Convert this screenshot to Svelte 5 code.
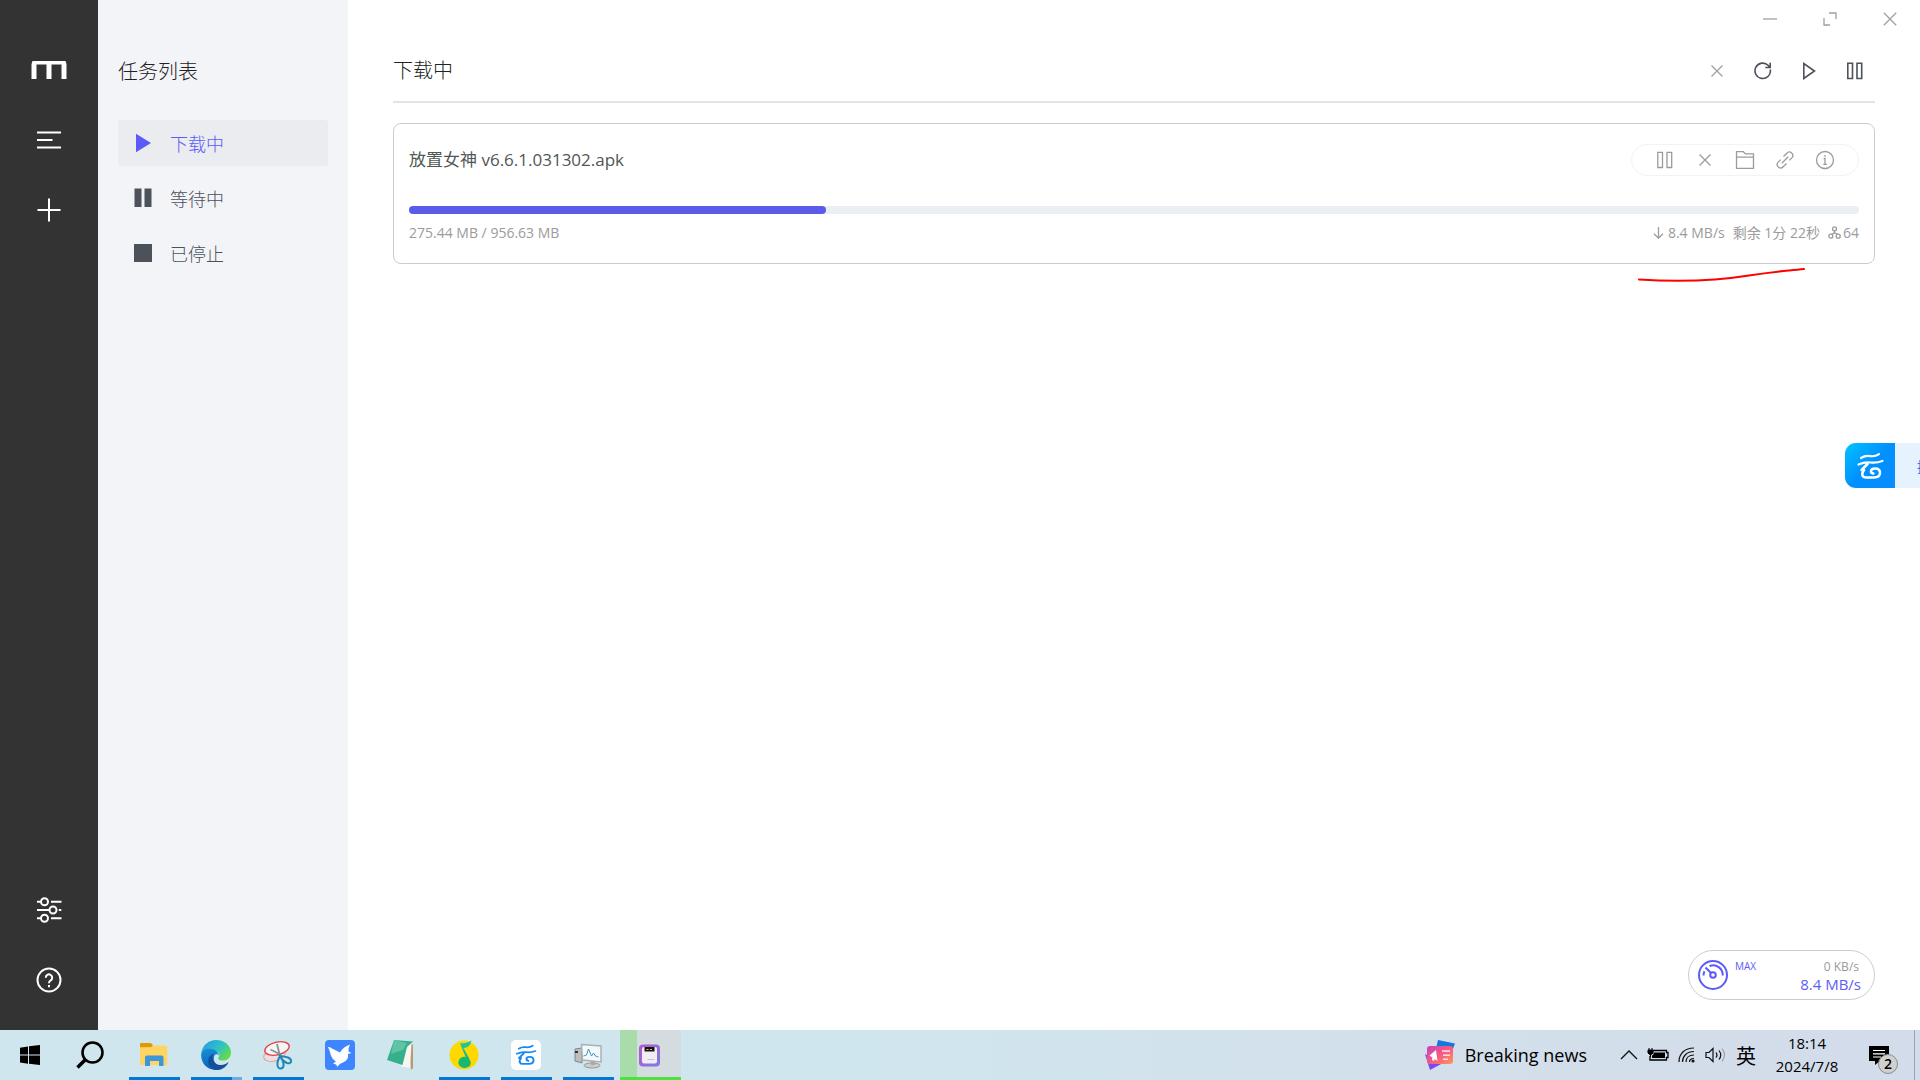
<script>
    let filters = [
        { id: 'active', label: '下载中' },
        { id: 'waiting', label: '等待中' },
        { id: 'stopped', label: '已停止' }
    ];
    let current = $state('active');
    let currentLabel = $derived(filters.find(f => f.id === current).label);

    let task = {
        name: '放置女神 v6.6.1.031302.apk',
        completed: 275.44,
        total: 956.63,
        speed: '8.4 MB/s',
        remaining: '剩余 1分 22秒',
        connections: 64
    };
    let percent = $derived((task.completed / task.total) * 100);

    let apps = [
        { id: 'explorer', title: '文件资源管理器', state: 'open' },
        { id: 'edge', title: 'Microsoft Edge', state: 'open multi' },
        { id: 'snip', title: '截图工具', state: 'open' },
        { id: 'bird', title: '迅雷', state: '' },
        { id: 'notes', title: '笔记', state: '' },
        { id: 'music', title: 'QQ音乐', state: 'open' },
        { id: 'cloud', title: '云盘', state: 'open' },
        { id: 'monitor', title: '任务管理器', state: 'open' },
        { id: 'motrix', title: 'Motrix', state: 'open busy' }
    ];
</script>

{#snippet icon(name)}
    {#if name === 'close'}
        <svg width="12" height="12" viewBox="0 0 12 12"><path d="M.5.5l11 11M11.500.500l-11 11" /></svg>
    {:else if name === 'pause'}
        <svg width="16" height="18" viewBox="0 0 16 18"><path d="M.8 1.300h4.700v15.200H.8zM10 1.300h4.700v15.200H10z" /></svg>
    {:else if name === 'play'}
        <svg width="14" height="18" viewBox="0 0 14 18"><path d="M1.800 1.500v15L12.500 9z" /></svg>
    {:else if name === 'refresh'}
        <svg width="18" height="18" viewBox="0 0 18 18"><path d="M16.300 7.500A7.700 7.700 0 1 1 14.300 3.500L15.500 5M16.200 .8v4.700h-4.900" /></svg>
    {:else if name === 'folder'}
        <svg width="20" height="20" viewBox="0 0 20 20"><path d="M1.500 18.300V1.700h6.800l2.200 2.200h8v14.400zM1.500 7.200h17" /></svg>
    {:else if name === 'link'}
        <svg width="18" height="18" viewBox="0 0 18 18"><path d="M5.800 12.200l6.400-6.400M7.500 5.500l3.300-3.300a3.300 3.300 0 0 1 5 4.700l-2.500 2.500M10.500 12.500l-3.300 3.300a3.300 3.300 0 0 1-5-4.700L4.700 8.600" /></svg>
    {:else if name === 'info'}
        <svg width="20" height="20" viewBox="0 0 20 20"><circle cx="10" cy="10" r="8.500" /><path d="M8.600 8.500H10v5.800M8.300 14.300h3.500M10 5v1.700" /></svg>
    {/if}
{/snippet}

{#snippet cloudMark()}
    <path d="M6 6q4-2.600 9-1.900t9-1.900M3.500 12.500q6-2.700 12-2t12-1.500" stroke-width="2.200" />
    <path d="M12.500 12l-6 6h2.500q-2.500 3.500-1.500 5.500.8 2 4 2h7.500q6 0 6-4.700 0-4.300-5-4.300-4 0-4 2.800 0 2.200 2.400 2.200" stroke-width="2.500" stroke-linejoin="round" />
{/snippet}

<div class="desktop">
    <div class="app">
        <aside class="rail">
            <div class="rail-top">
                <a class="rail-btn" href="#home" aria-label="Motrix">
                    <svg width="36" height="20" viewBox="0 0 36 20"><path d="M3 19V4.500Q3 2 5.500 2h25Q33 2 33 4.500V19M18 2v17" fill="none" stroke="#fff" stroke-width="5" /><path d="M0 0h36v1H0z" fill="#333" /></svg>
                </a>
                <button class="rail-btn" aria-label="任务列表">
                    <svg width="26" height="20" viewBox="0 0 26 20"><path d="M1 2.500h24M1 10h15.500M1 17.500h24" stroke="#fff" stroke-width="2" /></svg>
                </button>
                <button class="rail-btn" aria-label="新建任务">
                    <svg width="24" height="24" viewBox="0 0 24 24"><path d="M12 .5v23M.5 12h23" stroke="#fff" stroke-width="2" /></svg>
                </button>
            </div>
            <div class="rail-bottom">
                <button class="rail-btn" aria-label="偏好设置">
                    <svg width="26" height="26" viewBox="0 0 26 26" fill="none" stroke="#fff" stroke-width="2">
                        <path d="M1 4.800h3.500M15 4.800h10.500M1 13h12M22.800 13h2.500M1 21.300h3.500M15 21.300h10.500" />
                        <circle cx="8.500" cy="4.800" r="3.500" /><circle cx="17" cy="13" r="3.500" /><circle cx="8.500" cy="21.300" r="3.500" />
                    </svg>
                </button>
                <button class="rail-btn" aria-label="帮助">
                    <svg width="26" height="26" viewBox="0 0 26 26" fill="none" stroke="#fff" stroke-width="2">
                        <circle cx="13" cy="13" r="11.500" />
                        <path d="M9.800 10.700a3.200 3.200 0 1 1 4.900 2.600Q13 14.300 13 16.200M13 18v2.200" />
                    </svg>
                </button>
            </div>
        </aside>

        <nav class="subnav">
            <h3>任务列表</h3>
            <ul>
                {#each filters as f (f.id)}
                    <li>
                        <button class:active={current === f.id} onclick={() => current = f.id}>
                            <svg width="18" height="20" viewBox="0 0 18 20" fill="currentColor">
                                {#if f.id === 'active'}
                                    <path d="M2 .8v18.400L17 10z" />
                                {:else if f.id === 'waiting'}
                                    <path d="M.5 .5h7v18.500h-7zM10.500 .5h7v18.500h-7z" />
                                {:else}
                                    <path d="M0 1h18v18H0z" />
                                {/if}
                            </svg>
                            {f.label}
                        </button>
                    </li>
                {/each}
            </ul>
        </nav>

        <main>
            <div class="window-controls">
                <button aria-label="最小化"><svg width="14" height="14" viewBox="0 0 14 14"><path d="M0 7h14" /></svg></button>
                <button aria-label="最大化"><svg width="14" height="14" viewBox="0 0 14 14"><path d="M6 1h7v6M1 6v7h6" /></svg></button>
                <button aria-label="关闭"><svg width="14" height="14" viewBox="0 0 14 14"><path d="M.8.8l12.400 12.400M13.200.8L.8 13.200" /></svg></button>
            </div>

            <header>
                <h4>{currentLabel}</h4>
                <div class="task-actions">
                    <button class="disabled" aria-label="删除">{@render icon('close')}</button>
                    <button aria-label="刷新">{@render icon('refresh')}</button>
                    <button aria-label="全部开始">{@render icon('play')}</button>
                    <button aria-label="全部暂停">{@render icon('pause')}</button>
                </div>
            </header>

            <article class="task">
                <div class="task-head">
                    <span class="task-name">{task.name}</span>
                    <div class="item-actions">
                        {#each ['pause', 'close', 'folder', 'link', 'info'] as name}
                            <button aria-label={name}>{@render icon(name)}</button>
                        {/each}
                    </div>
                </div>
                <div class="progress" role="progressbar" aria-label={task.name} aria-valuenow={Math.round(percent)}>
                    <div class="bar" style="width: {percent}%"></div>
                </div>
                <div class="task-info">
                    <span>{task.completed} MB / {task.total} MB</span>
                    <div class="task-speed">
                        <span><svg width="11" height="12" viewBox="0 0 11 12"><path d="M5.500 0v11M1 6.800l4.500 4.400L10 6.800" /></svg>{task.speed}</span>
                        <span>{task.remaining}</span>
                        <span class="peers"><svg width="13" height="13" viewBox="0 0 13 13"><circle cx="6.500" cy="2.800" r="2" /><circle cx="2.800" cy="10.200" r="2" /><circle cx="10.200" cy="10.200" r="2" /><path d="M6.500 4.800v2L3.500 8.400M6.500 6.800l3 1.600" /></svg>{task.connections}</span>
                    </div>
                </div>
            </article>

            <svg class="mark" width="170" height="16" viewBox="0 0 170 16"><path d="M2 12.500C50 15.500 84 13 112 8.500S150 4 167 2" /></svg>
        </main>

        <div class="speedometer">
            <svg width="32" height="32" viewBox="0 0 32 32" fill="none" stroke="#5b5bfa" stroke-width="2">
                <circle cx="16" cy="16" r="14" />
                <circle cx="16" cy="16" r="2.800" />
                <path d="M14 14L8.500 8.500M12.500 7.200A9.500 9.500 0 0 1 25.700 16.500M6.500 16.500q0-2.500 1-4.300" />
            </svg>
            <span class="mode">MAX</span>
            <div class="rates">
                <span class="up">0 KB/s</span>
                <span class="down">{task.speed}</span>
            </div>
        </div>

        <div class="drop-dock">
            <div class="dock-logo">
                <svg width="30" height="28" viewBox="0 0 30 28" fill="none" stroke="#fff" stroke-linecap="round">{@render cloudMark()}</svg>
            </div>
            <span>拖拽上传</span>
        </div>
    </div>

    <footer class="taskbar">
        <button class="start" aria-label="开始">
            <svg width="20" height="20" viewBox="0 0 20 20"><path d="M0 2.700l8-1.200V9.500H0zM9 1.300L20 0v9.500H9zM0 10.500h8v8.200l-8-1.200zM9 10.500h11V20L9 18.800z" /></svg>
        </button>
        <button class="start" aria-label="搜索">
            <svg width="28" height="28" viewBox="0 0 28 28" fill="none" stroke="#000"><circle cx="16.500" cy="11.500" r="10" stroke-width="2.600" /><path d="M9.500 18.500L1.500 26.500" stroke-width="3.500" /></svg>
        </button>

        <div class="apps">
            {#each apps as app (app.id)}
                <button class="app-btn {app.state}" aria-label={app.title}>
                    <svg width="30" height="30" viewBox="0 0 30 30">
                        {#if app.id === 'explorer'}
                            <path d="M1 4q0-1 1-1h10l2 2.500-2 2H1z" fill="#e09a00" />
                            <path d="M1 7.500h11l2-2h13q1.300 0 1.300 1.300V24q0 1-1 1H2q-1 0-1-1z" fill="#ffd562" />
                            <path d="M6 26V17.500q0-2 2-2h14.500q2 0 2 2V26h-4.500v-5h-9v5z" fill="#3d96d8" />
                        {:else if app.id === 'edge'}
                            <defs>
                                <linearGradient id="edge-top" x1="0" y1="0" x2="1" y2=".6"><stop offset=".2" stop-color="#2aa5dc" /><stop offset=".6" stop-color="#2cc3c5" /><stop offset="1" stop-color="#62db4a" /></linearGradient>
                                <linearGradient id="edge-low" x1="0" y1="0" x2=".3" y2="1"><stop offset="0" stop-color="#1a91dc" /><stop offset="1" stop-color="#0a62b4" /></linearGradient>
                            </defs>
                            <path d="M.3 14C1 5 8 0 15 0c9 0 15 6 15 12.500C30 18 26 20.500 22 20.500c-4 0-5.500-1.500-4.500-3C20 14 17 11 13 11 8 8 3 9 .3 14z" fill="url(#edge-top)" />
                            <path d="M.2 14C1.500 9.500 6 8 10 9c5 .5 8 4 7.800 6.800-1-2-3.300-1.800-4.300-.3C11 20 15 27 22 28c-2 1.300-4.500 2-7 2C5 30-.5 22 .2 14z" fill="url(#edge-low)" />
                            <path d="M12.500 13.500C9.500 19 13.500 25 19.500 25c4 0 6.500-1.500 8-3.300C27 25 22 30 16 30 10 30 6 24.500 7.500 19c.8-3 3-4.800 5-5.500z" fill="#12509c" />
                        {:else if app.id === 'snip'}
                            <ellipse cx="11.500" cy="15" rx="11" ry="6" fill="#ecdfe4" stroke="#e69a9f" transform="rotate(-15 11.500 15)" />
                            <ellipse cx="14" cy="8.500" rx="12.500" ry="6.300" fill="#f5f5f6" stroke="#e04040" stroke-width="1.300" transform="rotate(-14 14 8.500)" />
                            <path d="M14 4l3 12M7.500 9.500l11 5.500" stroke="#8b9299" stroke-width="1.800" />
                            <path d="M17 16q-3 5-2.500 9 .5 4 3.500 3.500t2.500-5Q20 20 17 16zM17 16q3 5.500 7 7 3.500 1 4-1.500t-3-4Q22 16.500 17 16z" fill="none" stroke="#1f86ba" stroke-width="2" />
                        {:else if app.id === 'bird'}
                            <rect width="30" height="30" rx="4" fill="#3f85ff" />
                            <path d="M3 7q2-.5 4 1.500l8 4Q18 7 25 4.500q-2 3.500-1.500 7l3 1.500-3.500 1q1 6-5 8.500-4 1-5.500 4.500-.5-3-4.500-3.500l3-2q-5-3-6-9.500z" fill="#fff" />
                        {:else if app.id === 'notes'}
                            <path d="M22 4l4 .5V28l-2 2z" fill="#b99a6c" />
                            <path d="M17 3l7.500 1L23 28l-6-1-3-1z" fill="#f6f6f2" />
                            <path d="M7 0l19 1.500L20 7l-4.500 18L0 20z" fill="#35b08b" />
                            <path d="M7 0l13 3-4 7L4 14z" fill="#8ad5bd" opacity=".5" />
                        {:else if app.id === 'music'}
                            <circle cx="15" cy="15" r="14.500" fill="#fdd900" />
                            <path d="M22.500.5Q18 3.500 11 3.500L17 18h3L14.500 8Q21 8 22.500.5z" fill="#1fc49a" />
                            <path d="M14 9l7 11q2 4-1 6.500-3.500 2.500-8 .5-4-3-2-7t7.500-3z" fill="#18b96f" />
                        {:else if app.id === 'cloud'}
                            <rect width="30" height="30" rx="5" fill="#fff" />
                            <g transform="translate(3 4) scale(.78)" fill="none" stroke="#1488fa" stroke-linecap="round">{@render cloudMark()}</g>
                        {:else if app.id === 'monitor'}
                            <path d="M2 9l7-1v15l-7-2z" fill="#bdbdbd" stroke="#858585" />
                            <path d="M2 12h3" stroke="#333" stroke-width="2" />
                            <path d="M8.500 4.500L28 6v16L9.500 20z" fill="#f2f8fb" stroke="#aab0b5" stroke-width="1.500" />
                            <path d="M10.500 16l3-1 2-6 3 7 2-3 2 3 3 1" fill="none" stroke="#4597b5" />
                            <ellipse cx="19" cy="25.500" rx="8" ry="2.500" fill="#ccc" stroke="#999" />
                            <path d="M18 21h4v4h-4z" fill="#aaa" />
                        {:else}
                            <defs><linearGradient id="motrix" x1="0" y1="0" x2="1" y2="1"><stop stop-color="#b45ac9" /><stop offset="1" stop-color="#7b7be9" /></linearGradient></defs>
                            <rect x="4" y="4.500" width="21" height="22" rx="4" fill="url(#motrix)" />
                            <rect x="7" y="7" width="15" height="16.500" rx="2" fill="#f0edf4" />
                            <path d="M9.500 7h10v4.500h-10z" fill="#17151c" /><path d="M11.500 9.500h2M15 9.500h2" stroke="#d6bf37" />
                            <path d="M12.500 19.500h7" stroke="#c5c0cc" />
                        {/if}
                    </svg>
                </button>
            {/each}
        </div>

        <div class="tray">
            <button class="news">
                <svg width="30" height="30" viewBox="0 0 30 30">
                    <defs><linearGradient id="news" x1="0" y1="0" x2="1" y2="1"><stop stop-color="#c343bd" /><stop offset=".5" stop-color="#f75a83" /><stop offset="1" stop-color="#ff9857" /></linearGradient></defs>
                    <path d="M13 0l17 3.500-5 13-14-8z" fill="#1678dc" /><path d="M0 14l18 9-13 7z" fill="#7a49f3" />
                    <rect x="2" y="6" width="26" height="18" rx="3" fill="url(#news)" />
                    <path d="M4.500 15.500L11 10l1.500 11-3-2-.5 2-2-1 .3-2.500z" fill="#fff" /><path d="M17 11h8M18 15.200h7M18 19.200h5" stroke="#ffe1df" stroke-width="1.500" />
                </svg>
                Breaking news
            </button>
            <button class="tray-caret" aria-label="显示隐藏的图标"><svg width="18" height="10" viewBox="0 0 18 10" fill="none" stroke="#111" stroke-width="1.300"><path d="M1 9l8-8 8 8" /></svg></button>
            <button aria-label="电池"><svg width="22" height="14" viewBox="0 0 22 14"><path d="M6 2.500h13.500v2h1.500v5h-1.500v2.500H3V8" fill="none" stroke="#000" stroke-width="1.300" /><path d="M6.500 4.500H18V10H5V7.500l1.500-1z" /><path d="M1 2h5v3L4.500 6.500h-2L1 5zM2 0v2M5 0v2M3.500 6v3" stroke="#000" /></svg></button>
            <button aria-label="网络"><svg width="18" height="18" viewBox="0 0 18 18" fill="none" stroke="#111" stroke-width="1.200"><path d="M1 16C1 7.500 7 2 16 2M4.500 16C4.500 10 9 5.500 16 5.500M8 16c0-4 3-7 8-7M11.500 16q0-3.500 4.500-3.500" /><circle cx="15" cy="15" r="1" fill="#111" /></svg></button>
            <button aria-label="音量"><svg width="22" height="18" viewBox="0 0 22 18" fill="none" stroke="#111" stroke-width="1.200"><path d="M1 6.500h3l4-4v13l-4-4H1zM11 6.500q2 2.500 0 5M14 4.500q3.500 4.500 0 9" /><path d="M17 2.500q5 6.500 0 13" stroke="#9aa1ad" /></svg></button>
            <button class="ime">英</button>
            <div class="clock"><time>18:14</time><time>2024/7/8</time></div>
            <button class="notice" aria-label="通知">
                <svg width="20" height="20" viewBox="0 0 20 20"><path d="M0 1h20v15h-9l-5 4v-4H0z" /><path d="M4 5.500h12M4 8.800h12M4 12h8" stroke="#fff" stroke-width="1.200" /></svg>
                <span class="badge">2</span>
            </button>
        </div>
    </footer>
</div>

<style>
    :global(body) { background: #fff; }
    .desktop { display: flex; flex-direction: column; min-height: 100vh; font-family: 'Open Sans', 'Noto Sans CJK SC', sans-serif; overflow: hidden; }
    .desktop * { box-sizing: border-box; }
    button { display: flex; align-items: center; justify-content: center; padding: 0; border: 0; background: none; color: inherit; font: inherit; cursor: pointer; }
    svg { display: block; flex: none; }
    h3, h4 { margin: 0; font-size: 20px; line-height: 30px; font-weight: 300; color: #202124; }

    .app { position: relative; flex: 1; display: flex; }

    .rail { width: 98px; padding: 35px 0 15px; display: flex; flex-direction: column; justify-content: space-between; background: #333; }
    .rail-btn { width: 100%; height: 70px; display: flex; align-items: center; justify-content: center; }

    .subnav { width: 250px; padding: 57px 20px 0; background: #f3f4f7; }
    .subnav ul { margin: 0; padding: 33px 0 0; list-style: none; display: flex; flex-direction: column; gap: 9px; }
    .subnav button { width: 100%; height: 46px; padding: 0 16px; gap: 18px; justify-content: flex-start; border-radius: 3px; font-size: 18px; font-weight: 300; color: #4d515a; }
    .subnav button.active { background: #eaecf0; color: #5b5bfa; }

    main { position: relative; flex: 1; min-width: 0; padding: 0 45px; }
    main svg { fill: none; stroke: currentColor; stroke-width: 1.300; }
    .window-controls { height: 37px; margin-right: -45px; display: flex; justify-content: flex-end; color: #a0a0a0; }
    .window-controls button { width: 60px; }
    header { height: 66px; padding-top: 3px; display: flex; align-items: center; justify-content: space-between; border-bottom: 2px solid #e4e4e4; }
    .task-actions { display: flex; margin-right: -3px; color: #4d515a; }
    .task-actions button { width: 46px; height: 30px; }
    .task-actions svg { stroke-width: 1.600; }
    .task-actions .disabled { color: #a0a0a0; }
    .task-actions .disabled svg { stroke-width: 1.300; }

    .task { margin-top: 20px; padding: 20px 15px 20px; border: 1px solid #ccc; border-radius: 8px; }
    .task-head { display: flex; align-items: center; justify-content: space-between; }
    .task-name { font-size: 17px; line-height: 26px; color: #505753; }
    .item-actions { display: flex; padding: 0 13px; border: 1px solid #f3f3f3; border-radius: 16px; color: #9b9b9b; }
    .item-actions button { width: 40px; height: 30px; }
    .progress { margin-top: 30px; height: 8px; border-radius: 8px; background: #ebeef5; }
    .bar { height: 100%; border-radius: 8px; background: #5b5be9; }
    .task-info { margin-top: 8px; display: flex; justify-content: space-between; font-size: 14px; line-height: 21px; color: #9b9b9b; }
    .task-speed, .task-speed span { display: flex; align-items: center; }
    .task-speed { gap: 8px; }
    .task-speed span { gap: 4px; }
    .task-speed .peers { gap: 2px; }

    .mark { position: absolute; top: 267px; right: 113px; }
    main .mark { stroke: #f00; stroke-width: 2; stroke-linecap: round; }

    .speedometer { position: absolute; right: 45px; bottom: 30px; width: 187px; height: 50px; padding: 0 13px 0 8px; display: flex; align-items: center; border: 1px solid #ccc; border-radius: 25px; background: #fff; color: #5b5bfa; }
    .mode { align-self: flex-start; margin-left: 6px; font-size: 10px; line-height: 30px; }
    .rates { flex: 1; display: flex; flex-direction: column; align-items: flex-end; padding-top: 2px; }
    .up { padding-right: 2px; font-size: 12px; line-height: 17px; color: #9b9b9b; }
    .down { font-size: 15px; line-height: 19px; }

    .drop-dock { position: absolute; top: 443px; right: 0; width: 75px; height: 45px; display: flex; align-items: center; overflow: hidden; border-radius: 11px 0 0 11px; background: #e6f3ff; color: #2b7de9; font-size: 14px; white-space: nowrap; }
    .dock-logo { flex: none; width: 50px; height: 45px; margin-right: 22px; display: flex; align-items: center; justify-content: center; background: linear-gradient(135deg, #00c3ff, #0091ff 50%, #0a8cff); }

    .taskbar { display: flex; height: 50px; background: linear-gradient(90deg, #d0e6ee, #d0e6ee 45%, #d3dfeb 75%, #d3dcea); color: #000; }
    .start { width: 60px; }
    .apps { display: flex; gap: 1px; padding-left: 4px; }
    .app-btn { position: relative; width: 61px; padding-right: 1px; }
    .app-btn.open::after { content: ''; position: absolute; left: 5px; right: 5px; bottom: 0; height: 3px; background: #0078d7; }
    .app-btn.multi::after { background: linear-gradient(90deg, #0078d7 41px, #69ade2 41px); }
    .app-btn.busy { background: linear-gradient(90deg, #a9dcab 17px, #d5dce0 17px); }
    .app-btn.busy::after { left: 0; right: 0; background: #4be23c; }

    .tray { flex: 1; display: flex; align-items: center; justify-content: flex-end; gap: 9px; margin-right: 5px; padding-right: 25px; border-right: 1px solid #9aa5b3; }
    .news { gap: 10px; margin-right: 24px; font-size: 18px; }
    .ime { font-size: 20px; }
    .clock { width: 84px; display: flex; flex-direction: column; align-items: center; font-size: 15px; line-height: 23px; }
    .notice { position: relative; margin-left: 11px; }
    .badge { position: absolute; left: 9px; top: 9px; width: 20px; height: 20px; border: 1px solid #8c8c8c; border-radius: 50%; background: #d0d0d0; font-size: 14px; line-height: 18px; font-weight: 600; }
</style>
